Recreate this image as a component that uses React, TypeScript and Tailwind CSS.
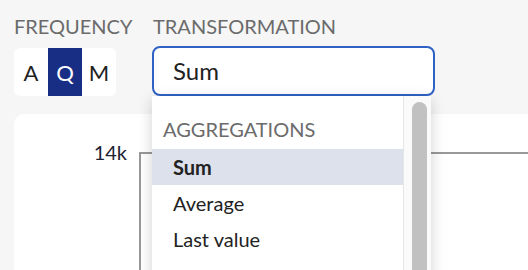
import { useState } from 'react'

const frequencies = ['A', 'Q', 'M']
const aggregations = ['Sum', 'Average', 'Last value']

export default function App() {
  const [freq, setFreq] = useState('Q')
  const [selected, setSelected] = useState('Sum')

  return (
    <div className="relative w-[528px] h-[270px] overflow-hidden bg-[#f6f6f6] font-['Lato','Noto_Sans',sans-serif]">
      <div className="flex pt-[14px] pl-[14px]">
        <div className="w-[138px]">
          <div className="text-[20px] leading-[24px] text-[#6b6b6b]">FREQUENCY</div>
          <div className="mt-[10px] flex w-fit overflow-hidden rounded-[6px] bg-white">
            {frequencies.map((f) => (
              <button
                key={f}
                onClick={() => setFreq(f)}
                className={`flex h-[48px] w-[34px] items-center justify-center text-[22px] ${
                  freq === f ? 'bg-[#182e85] text-white' : 'text-[#222]'
                }`}
              >
                {f}
              </button>
            ))}
          </div>
        </div>

        <div className="relative">
          <div className="pl-[1px] text-[20px] leading-[24px] text-[#6b6b6b]">TRANSFORMATION</div>
          <div className="mt-[8px] flex h-[50px] w-[283px] items-center rounded-[8px] border-2 border-[#2f62c5] bg-white pl-[19px] text-[24px] text-[#222]">
            {selected}
          </div>

          <div className="absolute left-0 top-[82px] z-10 flex h-[200px] w-[279px] bg-white shadow-[0_4px_14px_rgba(0,0,0,0.18)]">
            <div className="flex-1 pt-[21px]">
              <div className="mb-[8px] pl-[11px] text-[20px] leading-[24px] text-[#6b6b6b]">AGGREGATIONS</div>
              {aggregations.map((a) => (
                <div
                  key={a}
                  onClick={() => setSelected(a)}
                  className={`flex h-[36px] items-center pl-[21px] text-[20px] text-[#222] ${
                    selected === a ? 'bg-[#dde1ec] font-bold' : ''
                  }`}
                >
                  {a}
                </div>
              ))}
            </div>
            <div className="w-[28px] border-l border-[#e6e6e6] bg-[#fafafa] pl-[8px] pt-[6px]">
              <div className="h-[190px] w-[15px] rounded-full bg-[#c1c1c1]" />
            </div>
          </div>
        </div>
      </div>

      <div className="ml-[14px] mt-[18px] flex h-[200px] rounded-tl-[10px] bg-white">
        <div className="w-[125px] pr-[12px] pt-[26px] text-right text-[20px] leading-[24px] text-[#1e2235]">14k</div>
        <div className="mt-[38px] flex-1 border-l-2 border-t-2 border-[#999]" />
      </div>
    </div>
  )
}
